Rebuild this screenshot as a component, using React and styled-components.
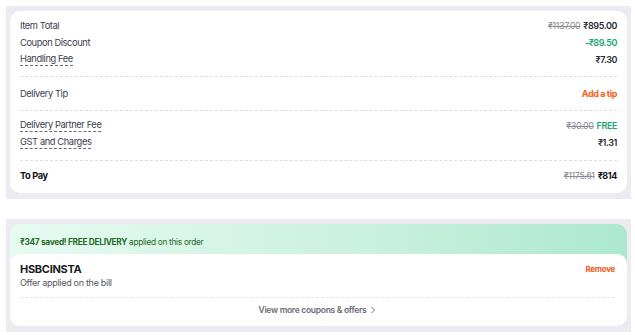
import React from 'react';
import styled, { createGlobalStyle } from 'styled-components';

const GlobalStyle = createGlobalStyle`
  body {
    margin: 0;
    background: #ffffff;
    font-family: Inter, "Noto Sans", sans-serif;
    -webkit-font-smoothing: antialiased;
  }
`;

const Page = styled.div`
  width: 635px;
  height: 335px;
  padding: 6px 4px 0 6px;
  box-sizing: border-box;
  display: flex;
  flex-direction: column;
  gap: 20px;
`;

const Section = styled.section`
  background: #ecebf1;
  padding: 5px 4px 6px 4px;
`;

const BillCard = styled.div`
  background: #ffffff;
  border-radius: 10px;
  padding: 6px 10px 1px;
`;

const Group = styled.div`
  border-top: ${({ $first }) => ($first ? 'none' : '1px dashed #dcdce0')};
  padding-top: ${({ $top }) => $top}px;
  padding-bottom: ${({ $bottom }) => $bottom}px;
`;

const Row = styled.div`
  display: flex;
  justify-content: space-between;
  align-items: center;
  height: 17px;
  font-size: 9.3px;
  letter-spacing: -0.4px;
  color: #3d3d4e;
`;

const Label = styled.span`
  font-weight: ${({ $bold }) => ($bold ? 700 : 400)};
  color: ${({ $bold }) => ($bold ? '#111118' : '#3d3d4e')};
  border-bottom: ${({ $dashed }) => ($dashed ? '1px dashed #6a6a78' : 'none')};
  padding-bottom: ${({ $dashed }) => ($dashed ? '1px' : '0')};
  line-height: 11px;
`;

const Values = styled.span`
  display: flex;
  gap: 3px;
  align-items: center;
  font-size: 9px;
`;

const Strike = styled.span`
  text-decoration: line-through;
  color: #8a8a96;
`;

const Amount = styled.span`
  font-size: 9px;
  font-weight: ${({ $weight }) => $weight || 600};
  color: ${({ $color }) => $color || '#2a2a36'};
`;

const CouponWrap = styled.div`
  border-radius: 10px;
  overflow: hidden;
  background: linear-gradient(90deg, #e7fbf1 0%, #c9f0de 60%, #ace8cf 100%);
`;

const SavedBar = styled.div`
  padding: 12px 10px 6px;
  font-size: 8.3px;
  line-height: 12px;
  letter-spacing: -0.3px;
  color: #1f6b1f;
`;

const CouponCard = styled.div`
  background: #ffffff;
  border-radius: 10px 10px 0 0;
  padding: 8px 12px 0 10px;
`;

const CouponHead = styled.div`
  display: flex;
  justify-content: space-between;
  align-items: center;
  height: 14px;
`;

const Code = styled.span`
  font-size: 11px;
  font-weight: 700;
  letter-spacing: -0.3px;
  color: #1a1a22;
`;

const Remove = styled.span`
  font-size: 8px;
  font-weight: 700;
  letter-spacing: -0.3px;
  color: #f5571a;
`;

const Note = styled.div`
  font-size: 9px;
  line-height: 14px;
  letter-spacing: -0.3px;
  color: #555560;
`;

const Divider = styled.div`
  border-top: 1px dashed #e4e4e8;
  margin-top: 7px;
`;

const MoreLink = styled.div`
  height: 24px;
  display: flex;
  align-items: center;
  justify-content: center;
  gap: 4px;
  font-size: 8.5px;
  font-weight: 600;
  letter-spacing: -0.3px;
  color: #6a6a74;
  padding-bottom: 4px;
`;

export default function App() {
  return (
    <>
      <GlobalStyle />
      <Page>
        <Section>
          <BillCard>
            <Group $first $top={0} $bottom={8}>
              <Row>
                <Label>Item Total</Label>
                <Values>
                  <Strike>₹1137.00</Strike>
                  <Amount>₹895.00</Amount>
                </Values>
              </Row>
              <Row>
                <Label>Coupon Discount</Label>
                <Amount $color="#1ba672">-₹89.50</Amount>
              </Row>
              <Row>
                <Label $dashed>Handling Fee</Label>
                <Amount>₹7.30</Amount>
              </Row>
            </Group>
            <Group $top={8} $bottom={8}>
              <Row>
                <Label>Delivery Tip</Label>
                <Amount $color="#fc5c14" $weight={700}>Add a tip</Amount>
              </Row>
            </Group>
            <Group $top={6} $bottom={9}>
              <Row>
                <Label $dashed>Delivery Partner Fee</Label>
                <Values>
                  <Strike>₹30.00</Strike>
                  <Amount $color="#1ba672">FREE</Amount>
                </Values>
              </Row>
              <Row>
                <Label $dashed>GST and Charges</Label>
                <Amount>₹1.31</Amount>
              </Row>
            </Group>
            <Group $top={6} $bottom={8}>
              <Row>
                <Label $bold>To Pay</Label>
                <Values>
                  <Strike>₹1175.61</Strike>
                  <Amount $color="#111118" $weight={700}>₹814</Amount>
                </Values>
              </Row>
            </Group>
          </BillCard>
        </Section>

        <Section>
          <CouponWrap>
            <SavedBar>
              <b>₹347 saved! FREE DELIVERY</b> applied on this order
            </SavedBar>
            <CouponCard>
              <CouponHead>
                <Code>HSBCINSTA</Code>
                <Remove>Remove</Remove>
              </CouponHead>
              <Note>Offer applied on the bill</Note>
              <Divider />
              <MoreLink>
                View more coupons &amp; offers
                <svg width="6" height="8" viewBox="0 0 6 8" fill="none">
                  <path d="M1.5 1l3 3-3 3" stroke="#6a6a74" strokeWidth="1" />
                </svg>
              </MoreLink>
            </CouponCard>
          </CouponWrap>
        </Section>
      </Page>
    </>
  );
}
